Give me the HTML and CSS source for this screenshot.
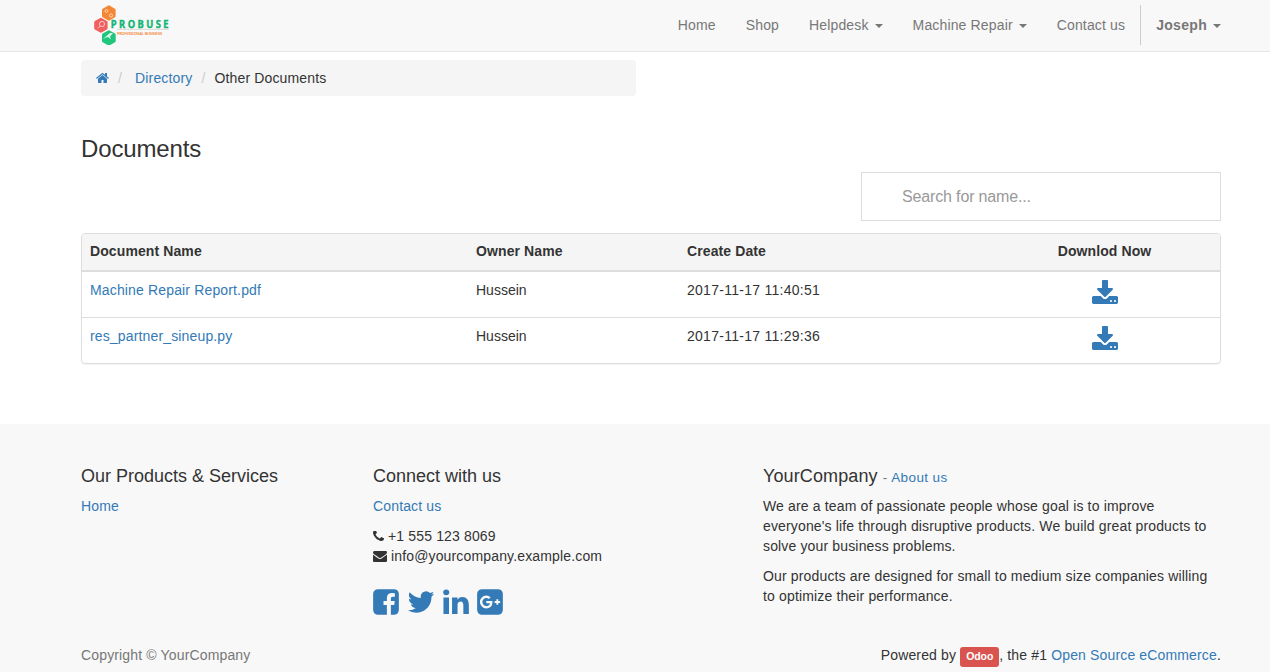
FILE: index.html
```html
<!DOCTYPE html>
<html lang="en">
<head>
<meta charset="utf-8">
<title>Documents</title>
<link rel="stylesheet" href="styles.css">
</head>
<body>
<svg class="defs" width="0" height="0">
  <symbol id="download" viewBox="64 0 1664 1792"><path d="M1344 1344q0-26-19-45t-45-19-45 19-19 45 19 45 45 19 45-19 19-45zm256 0q0-26-19-45t-45-19-45 19-19 45 19 45 45 19 45-19 19-45zm128-224v320q0 40-28 68t-68 28h-1472q-40 0-68-28t-28-68v-320q0-40 28-68t68-28h465l135 136q58 56 136 56t136-56l136-136h464q40 0 68 28t28 68zm-325-569q17 41-14 70l-448 448q-18 19-45 19t-45-19l-448-448q-31-29-14-70 17-39 59-39h256v-448q0-26 19-45t45-19h256q26 0 45 19t19 45v448h256q42 0 59 39z"/></symbol>
</svg>
<header class="navbar">
  <div class="container navbar-inner">
    <a class="brand" href="#">
      <svg width="80" height="42" viewBox="0 0 80 42">
        <path class="hex-orange" d="M15.500 2.500q-.6-.4-1.200 0l-5.600 3.200q-.7.400-.7 1.200v6.200q0 .8.700 1.200l5.400 3.100q.7.400 1.400 0l5.400-3.100q.7-.4.700-1.200v-6.200q0-.8-.7-1.200z"/>
        <path class="hex-red" d="M7.500 14.900q-.6-.4-1.200 0l-5.400 3.100q-.7.400-.7 1.200v6.100q0 .8.700 1.200l5.400 3.100q.6.400 1.200 0l5.400-3.100q.7-.4.700-1.200v-6.100q0-.8-.7-1.200z"/>
        <path class="hex-green" d="M15.500 27.400q-.7-.4-1.300 0l-5.500 3.200q-.7.400-.7 1.200v6.200q0 .8.700 1.200l5.500 3.200q.6.400 1.300 0l5.500-3.200q.7-.4.700-1.200v-6.200q0-.8-.7-1.200z"/>
        <circle class="mark" cx="12.500" cy="8" r="1.400"/><circle class="mark" cx="17" cy="12.500" r="1.600"/>
        <circle class="mark" cx="8" cy="21" r="2.600"/><path class="mark" d="M6.200 23L3.800 25.400"/>
        <path class="mark-fill" d="M9 36l7-6h3l-3 3.500 1 3-3-2.500-2 .5z"/>
        <text class="logo-name" transform="translate(16.800 25.200) scale(.85 1)" textLength="68" lengthAdjust="spacing">PROBUSE</text>
        <path class="logo-rule" d="M23 26.300H75"/>
        <text class="logo-tag" x="23" y="32" textLength="45" lengthAdjust="spacingAndGlyphs">PROFESSIONAL BUSINESS</text>
      </svg>
    </a>
    <nav class="menu">
      <a href="#"><span class="t">Home</span></a>
      <a href="#"><span class="t">Shop</span></a>
      <a href="#"><span class="t">Helpdesk</span><i class="caret"></i></a>
      <a href="#"><span class="t">Machine Repair</span><i class="caret"></i></a>
      <a href="#"><span class="t">Contact us</span></a>
      <a class="user" href="#"><b class="t">Joseph</b><i class="caret"></i></a>
    </nav>
  </div>
</header>
<main class="container">
  <ol class="breadcrumb">
    <li><a href="#"><svg class="home" viewBox="64 0 1664 1792"><path d="M1472 992v480q0 26-19 45t-45 19h-384v-384h-256v384h-384q-26 0-45-19t-19-45v-480q0-1 .5-3t.5-3l575-474 575 474q1 2 1 6zm223-69l-62 74q-8 9-21 11h-3q-13 0-21-7l-692-577-692 577q-12 8-24 7-13-2-21-11l-62-74q-8-10-7-23.500t11-21.500l719-599q32-26 76-26t76 26l244 204v-195q0-14 9-23t23-9h192q14 0 23 9t9 23v408l219 182q10 8 11 21.500t-7 23.500z"/></svg></a></li>
    <li class="sep wide">/</li>
    <li><a href="#">Directory</a></li>
    <li class="sep">/</li>
    <li>Other Documents</li>
  </ol>
  <h3>Documents</h3>
  <div class="search-row"><input class="search" type="text" placeholder="Search for name..."></div>
  <div class="panel">
    <div class="row head"><span>Document Name</span><span>Owner Name</span><span>Create Date</span><span class="center">Downlod Now</span></div>
    <div class="row"><span><a href="#">Machine Repair Report.pdf</a></span><span class="owner">Hussein</span><span class="date">2017-11-17 11:40:51</span><span class="center"><a href="#"><svg class="dl"><use href="#download"/></svg></a></span></div>
    <div class="row"><span><a href="#">res_partner_sineup.py</a></span><span class="owner">Hussein</span><span class="date">2017-11-17 11:29:36</span><span class="center"><a href="#"><svg class="dl"><use href="#download"/></svg></a></span></div>
  </div>
</main>
<footer class="footer">
  <div class="container columns">
    <section>
      <h4>Our Products &amp; Services</h4>
      <p><a href="#">Home</a></p>
    </section>
    <section>
      <h4>Connect with us</h4>
      <p><a href="#">Contact us</a></p>
      <div class="contact"><svg class="phone" viewBox="192 256 1408 1280"><path d="M1600 1240q0 27-10 70.500t-21 68.500q-21 50-122 106-94 51-186 51-27 0-53-3.500t-57.500-12.500-47-14.500-55.500-20.500-49-18q-98-35-175-83-127-79-264-216t-216-264q-48-77-83-175-3-9-18-49t-20.500-55.500-14.500-47-12.500-57.500-3.500-53q0-92 51-186 56-101 106-122 25-11 68.500-21t70.500-10q14 0 21 3 18 6 53 76 11 19 30 54t35 63.500 31 53.500q3 4 17.500 25t21.500 35.500 7 28.500q0 20-28.500 50t-62 55-62 53-28.500 46q0 9 5 22.500t8.500 20.500 14 24 11.500 19q76 137 174 235t235 174q2 1 19 11.500t24 14 20.500 8.500 22.500 5q18 0 46-28.500t53-62 55-62 50-28.500q14 0 28.500 7t35.500 21.500 25 17.500q25 15 53.500 31t63.500 35 54 30q70 35 76 53 3 7 3 21z"/></svg><span>+1 555 123 8069</span></div>
      <div class="contact"><svg class="mail" viewBox="0 256 1792 1408"><path d="M1792 710v794q0 66-47 113t-113 47h-1472q-66 0-113-47t-47-113v-794q44 49 101 87 362 246 497 345 57 42 92.500 65.500t94.500 48 110 24.500h2q51 0 110-24.500t94.500-48 92.500-65.500q170-123 498-345 57-39 100-87zm0-294q0 79-49 151t-122 123q-376 261-468 325-10 7-42.500 31t-54 38.500-52 32.500-57.500 27-50 9h-2q-23 0-50-9t-57.500-27-52-32.500-54-38.500-42.500-31q-91-64-262-182.500t-205-142.500q-62-42-117-115.500t-55-136.500q0-78 41.500-130t118.500-52h1472q65 0 112.500 47t47.500 113z"/></svg><span>info@yourcompany.example.com</span></div>
      <div class="social">
        <a href="#"><svg viewBox="128 0 1536 1792"><path d="M1376 128q119 0 203.500 84.500t84.500 203.500v960q0 119-84.500 203.500t-203.500 84.500h-188v-595h199l30-232h-229v-148q0-56 23.500-84t91.500-28l122-1v-207q-63-9-178-9-136 0-217.500 80t-81.500 226v171h-200v232h200v595h-532q-119 0-203.500-84.500t-84.500-203.500v-960q0-119 84.500-203.500t203.500-84.500h960z"/></svg></a>
        <a href="#"><svg class="twitter" viewBox="64 0 1664 1792"><path d="M1684 408q-67 98-162 167 1 14 1 42 0 130-38 259.500t-115.500 248.500-184.500 210.500-258 146-323 54.500q-271 0-496-145 35 4 78 4 225 0 401-138-105-2-188-64.500t-114-159.500q33 5 61 5 43 0 85-11-112-23-185.500-111.500t-73.500-205.500v-4q68 38 146 41-66-44-105-115t-39-154q0-88 44-163 121 149 294.500 238.500t371.500 99.500q-8-38-8-74 0-134 94.500-228.500t228.500-94.500q140 0 236 102 109-21 205-78-37 115-142 178 93-10 186-50z"/></svg></a>
        <a href="#"><svg viewBox="128 0 1536 1792"><path d="M477 625v991h-330v-991h330zm21-306q1 73-50.500 122t-135.500 49h-2q-82 0-132-49t-50-122q0-74 51.500-122.500t134.500-48.500 133 48.500 51 122.500zm1166 729v568h-329v-530q0-105-40.500-164.500t-126.500-59.500q-63 0-105.500 34.500t-63.500 85.500q-11 30-11 81v553h-329q2-399 2-647t-1-296l-1-48h329v144h-2q20-32 41-56t56.500-52 87-43.500 114.500-15.500q171 0 275 113.500t104 332.500z"/></svg></a>
        <a href="#"><svg viewBox="128 0 1536 1792"><path d="M1045 905q0-26-6-64h-362v132h217q-3 24-16.500 50t-37.500 53-66.500 44.500-96.500 17.500q-99 0-169-71t-70-171 70-171 169-71q92 0 153 59l104-101q-108-100-257-100-160 0-272 112.500t-112 271.500 112 271.500 272 112.500q165 0 266.500-105t101.500-270zm345 46h109v-110h-109v-110h-110v110h-110v110h110v110h110v-110zm274-535v960q0 119-84.500 203.500t-203.500 84.500h-960q-119 0-203.500-84.500t-84.500-203.500v-960q0-119 84.500-203.500t203.500-84.500h960q119 0 203.500 84.500t84.500 203.500z"/></svg></a>
      </div>
    </section>
    <section>
      <h4 class="company">YourCompany <small>- <a href="#">About us</a></small></h4>
      <p>We are a team of passionate people whose goal is to improve<br>everyone's life through disruptive products. We build great products to<br>solve your business problems.</p>
      <p>Our products are designed for small to medium size companies willing<br>to optimize their performance.</p>
    </section>
  </div>
  <div class="container bottom">
    <span class="muted">Copyright © YourCompany</span>
    <span class="powered">Powered by <a class="label" href="#">Odoo</a>, the #1 <a href="#">Open Source eCommerce</a>.</span>
  </div>
</footer>
</body>
</html>
```
FILE: styles.css
```css
* { box-sizing: border-box; }
html, body { height: 100%; }
body { margin: 0; overflow: hidden; background: #fff; color: #333; font: 14px/20px "Liberation Sans", Arial, sans-serif; letter-spacing: .15px; }
a { color: #337ab7; text-decoration: none; }
svg { display: block; fill: currentColor; }
.defs { position: absolute; }
.container { width: 1140px; margin: 0 0 0 81px; }
.navbar { height: 52px; background: #f8f8f8; border-bottom: 1px solid #e7e7e7; }
.navbar-inner { display: flex; justify-content: space-between; }
.brand { padding: 3px 0 0 13px; letter-spacing: 0; }
.hex-orange { fill: #f58634; }
.hex-red { fill: #f0605f; }
.hex-green { fill: #1fc67c; }
.mark { fill: none; stroke: #fff; stroke-opacity: .7; stroke-width: .9; }
.mark-fill { fill: #fff; opacity: .85; }
.logo-name { font: bold 11px "Open Sans", sans-serif; fill: #12b574; stroke: #12b574; stroke-width: .4; }
.logo-rule { stroke: #ccc; stroke-width: .7; }
.logo-tag { font: 4.300px "Open Sans", sans-serif; fill: #f58634; stroke: #f58634; stroke-width: .15; }
.menu { display: flex; margin-right: -15px; padding-top: 5px; }
.menu a { display: flex; align-items: center; height: 40px; padding: 0 15px; color: #777; }
.caret { margin: 2px 0 0 6px; border-top: 4px solid; border-left: 4px solid transparent; border-right: 4px solid transparent; }
.menu .user { border-left: 1px solid #ccc; letter-spacing: .3px; }
.breadcrumb { display: flex; width: 555px; height: 36px; margin: 8px 0 0; padding: 8px 15px; background: #f5f5f5; border-radius: 4px; list-style: none; }
.home { width: 13px; height: 14px; margin-top: 3px; }
.sep { padding: 0 9px; color: #ccc; }
.sep.wide { padding-right: 13px; }
h3 { margin: 40px 0 0; font-size: 24px; line-height: 26px; font-weight: 400; letter-spacing: -.15px; }
.search-row { display: flex; justify-content: flex-end; margin-top: 10px; }
.search { width: 360px; height: 49px; padding: 12px 20px 12px 40px; border: 1px solid #ddd; font: 16px "Liberation Sans", Arial, sans-serif; letter-spacing: -.15px; }
.search::placeholder { color: #999; }
.panel { margin-top: 12px; border: 1px solid #ddd; border-radius: 4px; box-shadow: 0 1px 1px rgba(0,0,0,.05); overflow: hidden; }
.row { display: grid; grid-template-columns: 386px 211px 302px 247px; padding-top: 8px; border-bottom: 1px solid #ddd; }
.row > span { padding-left: 8px; }
.row .center { display: flex; justify-content: center; padding: 0 8px; }
.head { height: 38px; padding-top: 7px; border-bottom-width: 2px; background: #f5f5f5; font-weight: 700; letter-spacing: .1px; }
.row .owner { letter-spacing: 0; }
.row .date { letter-spacing: .27px; }
.dl { width: 26px; height: 28px; }
.row + .row { height: 46px; }
.row:last-child { height: 45px; border-bottom: 0; }
.footer { height: 248px; margin-top: 60px; padding-top: 42px; background: #f8f8f8; }
.columns { display: grid; grid-template-columns: 292px 390px 458px; height: 179px; }
h4 { height: 20px; margin: 0 0 10px; font-size: 18px; line-height: 20px; font-weight: 400; letter-spacing: 0; }
h4.company { letter-spacing: .12px; }
h4 small { font-size: 13.500px; color: #777; letter-spacing: .4px; }
p { margin: 0 0 10px; white-space: nowrap; }
.contact { display: flex; align-items: center; gap: 4px; }
.phone { width: 11px; height: 10px; }
.mail { width: 14px; height: 11px; }
.social { display: flex; gap: 8px; margin-top: 21px; }
.social svg { width: 26px; height: 30px; }
.social .twitter { width: 28px; }
.bottom { display: flex; justify-content: space-between; }
.muted { color: #777; }
.label { display: inline-block; padding: 4px 6px 5px; border-radius: 3px; background: #d9534f; color: #fff; font-size: 10.500px; line-height: 11px; font-weight: 700; letter-spacing: -.1px; }
```
